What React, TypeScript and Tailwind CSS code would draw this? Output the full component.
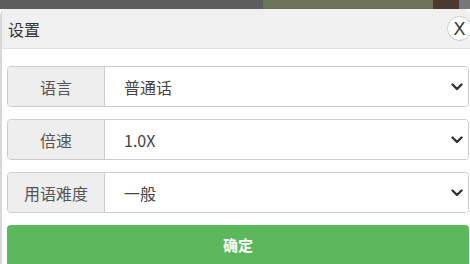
import { useState } from 'react'

const FONT = '"Noto Sans CJK SC", "Liberation Sans", sans-serif'

interface Field {
  label: string
  value: string
  options: string[]
}

const FIELDS: Field[] = [
  { label: '语言', value: '普通话', options: ['普通话', '粤语'] },
  { label: '倍速', value: '1.0X', options: ['0.5X', '1.0X', '1.5X', '2.0X'] },
  { label: '用语难度', value: '一般', options: ['简单', '一般', '困难'] },
]

function Chevron() {
  return (
    <svg width="12" height="8" viewBox="0 0 12 8" className="shrink-0">
      <path d="M1.5 1.5 L6 6 L10.5 1.5" fill="none" stroke="#333" strokeWidth="2.4" strokeLinecap="round" strokeLinejoin="round" />
    </svg>
  )
}

function SelectRow({ field }: { field: Field }) {
  const [value] = useState(field.value)
  return (
    <div className="flex h-[41px] rounded-[4px] border border-[#cccccc] overflow-hidden">
      <div className="w-[97px] shrink-0 bg-[#eeeeee] border-r border-[#cccccc] flex items-center justify-center text-[16px] text-[#555555]">
        {field.label}
      </div>
      <div className="flex-1 bg-white flex items-center justify-between pl-[19px] pr-[5px] text-[16px] text-[#444444]">
        <span>{value}</span>
        <Chevron />
      </div>
    </div>
  )
}

export default function App() {
  return (
    <div className="w-[470px] h-[264px] overflow-hidden flex flex-col" style={{ fontFamily: FONT }}>
      {/* backdrop strip showing behind the dialog */}
      <div className="h-[9px] shrink-0 flex">
        <div className="w-[263px] bg-[#5d5d5d]" />
        <div className="w-[170px] bg-[#6b7358]" />
        <div className="w-[26px] bg-[#4a3a30]" />
        <div className="flex-1 bg-[#777777]" />
      </div>

      <div className="flex-1 flex flex-col bg-white rounded-t-[7px] border-l-2 border-[#d8d8d8] overflow-hidden">
        <div className="h-[40px] shrink-0 bg-[#f0f0f0] border-b border-[#e2e2e2] flex items-center justify-between pl-[6px]">
          <span className="text-[16px] text-[#333333]">设置</span>
          <button className="w-[25px] h-[25px] mr-[-2px] rounded-full border border-[#cccccc] bg-white flex items-center justify-center text-[18px] leading-none text-[#333333]" style={{ fontFamily: '"Liberation Sans", sans-serif' }}>
            X
          </button>
        </div>

        <div className="flex flex-col gap-[12px] pt-[17px] pl-[5px] pr-[1px]">
          {FIELDS.map(f => (
            <SelectRow key={f.label} field={f} />
          ))}
          <button className="h-[40px] rounded-t-[4px] bg-[#5cb85c] text-white text-[15px] font-bold flex items-center justify-center">
            确定
          </button>
        </div>
      </div>
    </div>
  )
}
